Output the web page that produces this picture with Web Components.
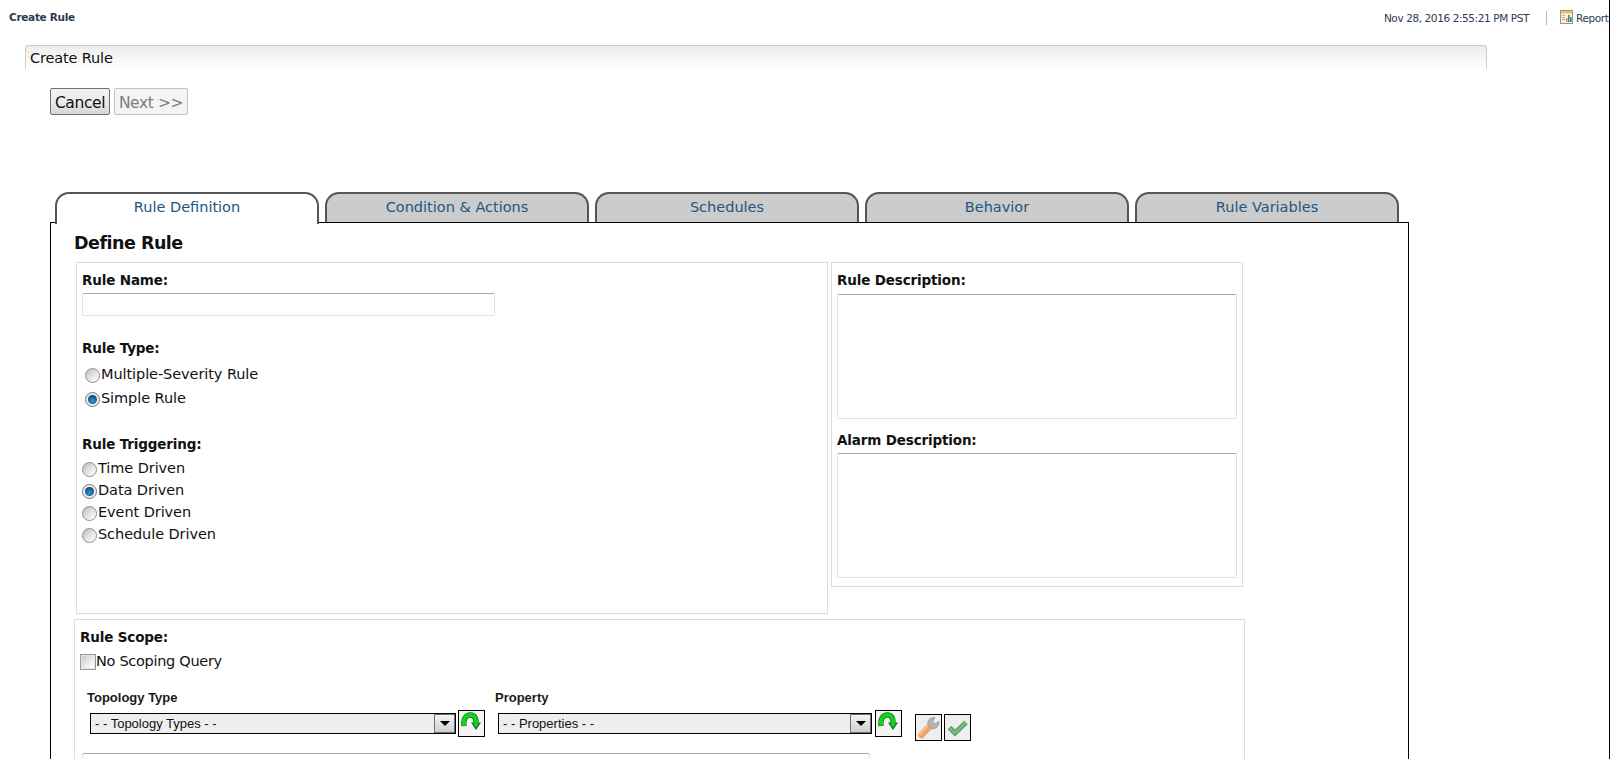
<!DOCTYPE html>
<html>
<head>
<meta charset="utf-8">
<title>Create Rule</title>
<style>
  html, body { margin: 0; padding: 0; background: #fff; overflow: hidden; height: 100%; }
  body { font-family: "DejaVu Sans", Verdana, sans-serif; color: #111; }
</style>
</head>
<body>
<rule-page>
  <top-bar slot="top" date="Nov 28, 2016 2:55:21 PM PST">Create Rule</top-bar>
  <panel-head slot="head">Create Rule</panel-head>
  <div slot="actions" style="display:flex;gap:4px">
    <action-button style="width:60px">Cancel</action-button>
    <action-button disabled style="width:74px">Next &gt;&gt;</action-button>
  </div>
  <tab-strip slot="tabs">
    <tab-item active>Rule Definition</tab-item>
    <tab-item>Condition &amp; Actions</tab-item>
    <tab-item>Schedules</tab-item>
    <tab-item>Behavior</tab-item>
    <tab-item>Rule Variables</tab-item>
  </tab-strip>
  <define-rule slot="body"></define-rule>
</rule-page>

<script>
class RulePage extends HTMLElement {
  constructor() {
    super();
    this.attachShadow({ mode: 'open' });
    this.shadowRoot.innerHTML = `
      <style>
        :host { display: block; box-sizing: border-box; width: 1610px; height: 759px; border-right: 1px solid #000; overflow: hidden; }
        .head { display: block; margin-left: 25px; width: 1462px; }
        .actions { padding-left: 50px; margin-top: 19px; }
        .tabs { margin-top: 77px; padding-left: 55px; position: relative; z-index: 1; }
        .body { margin-left: 50px; width: 1359px; box-sizing: border-box; height: 600px; border: 1px solid #000; }
      </style>
      <slot name="top"></slot>
      <div class="head"><slot name="head"></slot></div>
      <div class="actions"><slot name="actions"></slot></div>
      <div class="tabs"><slot name="tabs"></slot></div>
      <div class="body"><slot name="body"></slot></div>
    `;
  }
}
customElements.define('rule-page', RulePage);

class TopBar extends HTMLElement {
  constructor() {
    super();
    this.attachShadow({ mode: 'open' });
    this.shadowRoot.innerHTML = `
      <style>
        :host { display: flex; align-items: flex-start; height: 45px; box-sizing: border-box; padding: 10px 0 0 9px; color: #2c3a57; white-space: nowrap; }
        .title { font: bold 10.5px/14px "DejaVu Sans", sans-serif; letter-spacing: -0.3px; }
        .date { margin-left: auto; font: 10.5px/16px "DejaVu Sans", sans-serif; letter-spacing: -0.4px; }
        .sep { width: 1px; height: 14px; background: #bbb; margin: 1px 13px 0 17px; }
        .rep { display: flex; gap: 3px; width: 49px; overflow: hidden; font: 10.5px/16px "DejaVu Sans", sans-serif; letter-spacing: -0.4px; }
        svg { flex: none; }
      </style>
      <span class="title"><slot></slot></span>
      <span class="date"></span>
      <span class="sep"></span>
      <span class="rep">
        <svg width="13" height="14" viewBox="0 0 13 14">
          <rect x=".5" y=".5" width="12" height="13" fill="#f7f3e4" stroke="#9a9484"/>
          <rect x="1" y="1" width="11" height="2.5" fill="#f0c05a"/>
          <rect x="2" y="5" width="3" height="1" fill="#9db6c9"/><rect x="2" y="7" width="3" height="1" fill="#9db6c9"/><rect x="2" y="9" width="3" height="1" fill="#9db6c9"/>
          <rect x="6" y="8" width="1.5" height="4" fill="#e08a2c"/><rect x="8" y="5" width="1.5" height="7" fill="#4c8a3e"/><rect x="10" y="7" width="1.5" height="5" fill="#3a6fb0"/>
        </svg>
        <span>Report</span>
      </span>
    `;
  }
  connectedCallback() {
    this.shadowRoot.querySelector('.date').textContent = this.getAttribute('date');
  }
}
customElements.define('top-bar', TopBar);

class PanelHead extends HTMLElement {
  constructor() {
    super();
    this.attachShadow({ mode: 'open' });
    this.shadowRoot.innerHTML = `
      <style>
        :host { display: block; box-sizing: border-box; height: 24px; padding-left: 4px; border: 1px solid #ccc; border-bottom: 0; border-radius: 3px 3px 0 0; background: linear-gradient(#ececec, #fff); font: 14.5px/25px "DejaVu Sans", sans-serif; letter-spacing: -0.15px; color: #111; }
      </style>
      <slot></slot>
    `;
  }
}
customElements.define('panel-head', PanelHead);

class ActionButton extends HTMLElement {
  constructor() {
    super();
    this.attachShadow({ mode: 'open' });
    this.shadowRoot.innerHTML = `
      <style>
        :host { display: block; box-sizing: border-box; height: 27px; border: 1px solid #707070; border-radius: 2px; background: linear-gradient(#f2f2f2, #ebebeb 50%, #d6d6d6); text-align: center; font: 15.5px/28px "DejaVu Sans", sans-serif; letter-spacing: -0.4px; color: #111; }
        :host([disabled]) { border-color: #c2c2c2; background: #f4f4f4; color: #7d7d7d; }
      </style>
      <slot></slot>
    `;
  }
}
customElements.define('action-button', ActionButton);

class TabStrip extends HTMLElement {
  constructor() {
    super();
    this.attachShadow({ mode: 'open' });
    this.shadowRoot.innerHTML = `
      <style>
        :host { display: flex; gap: 6px; height: 30px; }
      </style>
      <slot></slot>
    `;
  }
}
customElements.define('tab-strip', TabStrip);

class TabItem extends HTMLElement {
  constructor() {
    super();
    this.attachShadow({ mode: 'open' });
    this.shadowRoot.innerHTML = `
      <style>
        :host { display: block; box-sizing: border-box; width: 264px; height: 30px; border: 2px solid #555; border-bottom: 0; border-radius: 14px 14px 0 0; background: #ccc; text-align: center; font: 14.5px/27px "DejaVu Sans", sans-serif; letter-spacing: 0px; color: #24557f; }
        :host([active]) { height: 32px; background: #fff; }
      </style>
      <slot></slot>
    `;
  }
}
customElements.define('tab-item', TabItem);

class GroupBox extends HTMLElement {
  constructor() {
    super();
    this.attachShadow({ mode: 'open' });
    this.shadowRoot.innerHTML = `
      <style>
        :host { display: block; box-sizing: border-box; border: 1px solid #dcdcdc; padding: 8px 5px 0; }
      </style>
      <slot></slot>
    `;
  }
}
customElements.define('group-box', GroupBox);

class FieldLabel extends HTMLElement {
  constructor() {
    super();
    this.attachShadow({ mode: 'open' });
    this.shadowRoot.innerHTML = `
      <style>
        :host { display: block; font: bold 13.5px/18px "DejaVu Sans", sans-serif; letter-spacing: -0.15px; color: #111; }
      </style>
      <slot></slot>
    `;
  }
}
customElements.define('field-label', FieldLabel);

class TextField extends HTMLElement {
  constructor() {
    super();
    this.attachShadow({ mode: 'open' });
    this.shadowRoot.innerHTML = `
      <style>
        :host { display: block; box-sizing: border-box; background: #fff; border: 1px solid #dde1e8; border-top-color: #aaaaae; border-radius: 2px; }
      </style>
    `;
  }
}
customElements.define('text-field', TextField);

class RadioRow extends HTMLElement {
  constructor() {
    super();
    this.attachShadow({ mode: 'open' });
    this.shadowRoot.innerHTML = `
      <style>
        :host { display: flex; align-items: center; height: 22px; font: 14.5px/22px "DejaVu Sans", sans-serif; letter-spacing: -0.08px; color: #111; }
        i { flex: none; box-sizing: border-box; width: 15px; height: 15px; margin: 2px 1px 0 0; border-radius: 50%; border: 1px solid #8f8f8f; background: linear-gradient(135deg, #bcbcbc, #f8f8f8 80%); display: flex; align-items: center; justify-content: center; }
        b { display: none; width: 9px; height: 9px; border-radius: 50%; background: radial-gradient(circle at 50% 65%, #2f9bd0, #0e5b8c 60%, #062f4d); }
        :host([checked]) b { display: block; }
        :host([checked]) i { background: #ececec; border-color: #777; }
      </style>
      <i><b></b></i><span><slot></slot></span>
    `;
  }
}
customElements.define('radio-row', RadioRow);

class CheckRow extends HTMLElement {
  constructor() {
    super();
    this.attachShadow({ mode: 'open' });
    this.shadowRoot.innerHTML = `
      <style>
        :host { display: flex; align-items: center; height: 22px; font: 14.5px/22px "DejaVu Sans", sans-serif; letter-spacing: -0.3px; color: #111; }
        i { flex: none; box-sizing: border-box; width: 16px; height: 16px; margin-top: 2px; border: 1px solid #9a9a9a; background: linear-gradient(135deg, #c4c4c4, #fbfbfb 80%); box-shadow: inset 0 0 0 1px #e6e6e6; }
      </style>
      <i></i><span><slot></slot></span>
    `;
  }
}
customElements.define('check-row', CheckRow);

class SelectBox extends HTMLElement {
  constructor() {
    super();
    this.attachShadow({ mode: 'open' });
    this.shadowRoot.innerHTML = `
      <style>
        :host { display: flex; box-sizing: border-box; height: 21px; margin-top: 3px; border: 1px solid #000; background: #eee; font: 13px/20px "Liberation Sans", Arial, sans-serif; color: #111; }
        .val { flex: 1; padding-left: 4px; white-space: nowrap; overflow: hidden; }
        .arrow { flex: none; box-sizing: border-box; width: 21px; height: 19px; border: 1px solid #6f6f6f; background: linear-gradient(#f4f4f4, #cfcfcf); display: flex; align-items: center; justify-content: center; }
        .arrow::before { content: ""; border: 5px solid transparent; border-top: 5px solid #000; border-bottom: 0; }
      </style>
      <span class="val"><slot></slot></span><span class="arrow"></span>
    `;
  }
}
customElements.define('select-box', SelectBox);

class IconButton extends HTMLElement {
  constructor() {
    super();
    this.attachShadow({ mode: 'open' });
    this.icons = {
      apply: `<path d="M6 16 C5 8 8.500 5 12.500 5 C16.500 5 18.500 9 18 13" fill="none" stroke="#1b6a1b" stroke-width="5.400"/>
              <path d="M13 12.500 L23 12.500 L18 20 Z" fill="#1b6a1b"/>
              <path d="M6 15.500 C5 8 8.500 5 12.500 5 C16.500 5 18.500 9 18 13.500" fill="none" stroke="#0fd81a" stroke-width="3.800"/>
              <path d="M15 13.500 L21 13.500 L18 17.800 Z" fill="#0fd81a"/>`,
      wrench: `<path d="M6.500 21 L15 12" stroke="#f3a06c" stroke-width="6.500" stroke-linecap="round"/>
               <path d="M5 20 L13 11.500" stroke="#f9bd96" stroke-width="1.800" stroke-linecap="round"/>
               <path d="M13 11 C12 6.500 15 3 20 3.500 L17.800 7.500 L20 10 L24 7.500 C24.500 12 21 15.500 16.500 14.500 Z" fill="#b2b2b2" stroke="#949494" stroke-width=".7"/>`,
      check: `<path d="M5.500 13.500 L11 19 L22 8.500" fill="none" stroke="#5f9d62" stroke-width="5"/>
              <path d="M5.500 13.500 L11 19 L22 8.500" fill="none" stroke="#7dbb7f" stroke-width="2"/>`
    };
    this.shadowRoot.innerHTML = `
      <style>
        :host { display: block; flex: none; box-sizing: border-box; width: 27px; height: 27px; border: 1px solid #000; background: #eee; }
        :host([kind="apply"]) { background: #f4f4f4; }
        svg { display: block; width: 25px; height: 25px; }
      </style>
      <svg viewBox="1 1 25 25"></svg>
    `;
  }
  connectedCallback() {
    this.shadowRoot.querySelector('svg').innerHTML = this.icons[this.getAttribute('kind')];
  }
}
customElements.define('icon-button', IconButton);

class SmallCaption extends HTMLElement {
  constructor() {
    super();
    this.attachShadow({ mode: 'open' });
    this.shadowRoot.innerHTML = `
      <style>
        :host { display: block; font: bold 13px/16px "Liberation Sans", Arial, sans-serif; color: #1a1a1a; }
      </style>
      <slot></slot>
    `;
  }
}
customElements.define('small-caption', SmallCaption);

class DefineRule extends HTMLElement {
  constructor() {
    super();
    this.attachShadow({ mode: 'open' });
    this.shadowRoot.innerHTML = `
      <style>
        :host { display: block; padding-left: 23px; }
        h2 { margin: 0; height: 39px; box-sizing: border-box; padding-top: 10px; font: bold 17.5px/21px "DejaVu Sans", sans-serif; letter-spacing: -0.5px; color: #111; }
        .cols { display: flex; gap: 3px; margin-left: 2px; align-items: flex-start; }
        .left { width: 752px; height: 352px; }
        .right { width: 412px; height: 325px; }
        .name { width: 413px; height: 23px; margin: 4px 0 23px; }
        .type { padding-left: 3px; margin-top: 5px; }
        .type radio-row { height: 24px; }
        .trig { margin: 25px 0 4px; }
        .desc { height: 125px; width: 400px; margin-top: 5px; }
        .gap { margin-top: 12px; }
        .gap + .desc { margin-top: 4px; }
        .scope { width: 1171px; height: 200px; margin-top: 5px; }
        .caps { display: flex; margin-top: 18px; padding-left: 7px; }
        .caps small-caption:first-child { width: 408px; }
        .row { display: flex; align-items: flex-start; margin: 4px 0 0 10px; }
        .row select-box:nth-of-type(1) { width: 366px; }
        .row select-box:nth-of-type(2) { width: 374px; }
        .m2 { margin-left: 2px; } .m3 { margin-left: 3px; } .m13 { margin-left: 13px; }
        .tool { margin-top: 4px; }
        .query { width: 788px; height: 80px; margin: 12px 0 0 2px; }
      </style>
      <h2>Define Rule</h2>
      <div class="cols">
        <group-box class="left">
          <field-label>Rule Name:</field-label>
          <text-field class="name"></text-field>
          <field-label>Rule Type:</field-label>
          <div class="type">
            <radio-row>Multiple-Severity Rule</radio-row>
            <radio-row checked>Simple Rule</radio-row>
          </div>
          <field-label class="trig">Rule Triggering:</field-label>
          <radio-row>Time Driven</radio-row>
          <radio-row checked>Data Driven</radio-row>
          <radio-row>Event Driven</radio-row>
          <radio-row>Schedule Driven</radio-row>
        </group-box>
        <group-box class="right">
          <field-label>Rule Description:</field-label>
          <text-field class="desc"></text-field>
          <field-label class="gap">Alarm Description:</field-label>
          <text-field class="desc"></text-field>
        </group-box>
      </div>
      <group-box class="scope">
        <field-label>Rule Scope:</field-label>
        <check-row style="margin-top:4px">No Scoping Query</check-row>
        <div class="caps">
          <small-caption>Topology Type</small-caption>
          <small-caption>Property</small-caption>
        </div>
        <div class="row">
          <select-box>- - Topology Types - -</select-box>
          <icon-button class="m2" kind="apply"></icon-button>
          <select-box class="m13">- - Properties - -</select-box>
          <icon-button class="m3" kind="apply"></icon-button>
          <icon-button class="m13 tool" kind="wrench"></icon-button>
          <icon-button class="m2 tool" kind="check"></icon-button>
        </div>
        <text-field class="query"></text-field>
      </group-box>
    `;
  }
}
customElements.define('define-rule', DefineRule);
</script>
</body>
</html>
